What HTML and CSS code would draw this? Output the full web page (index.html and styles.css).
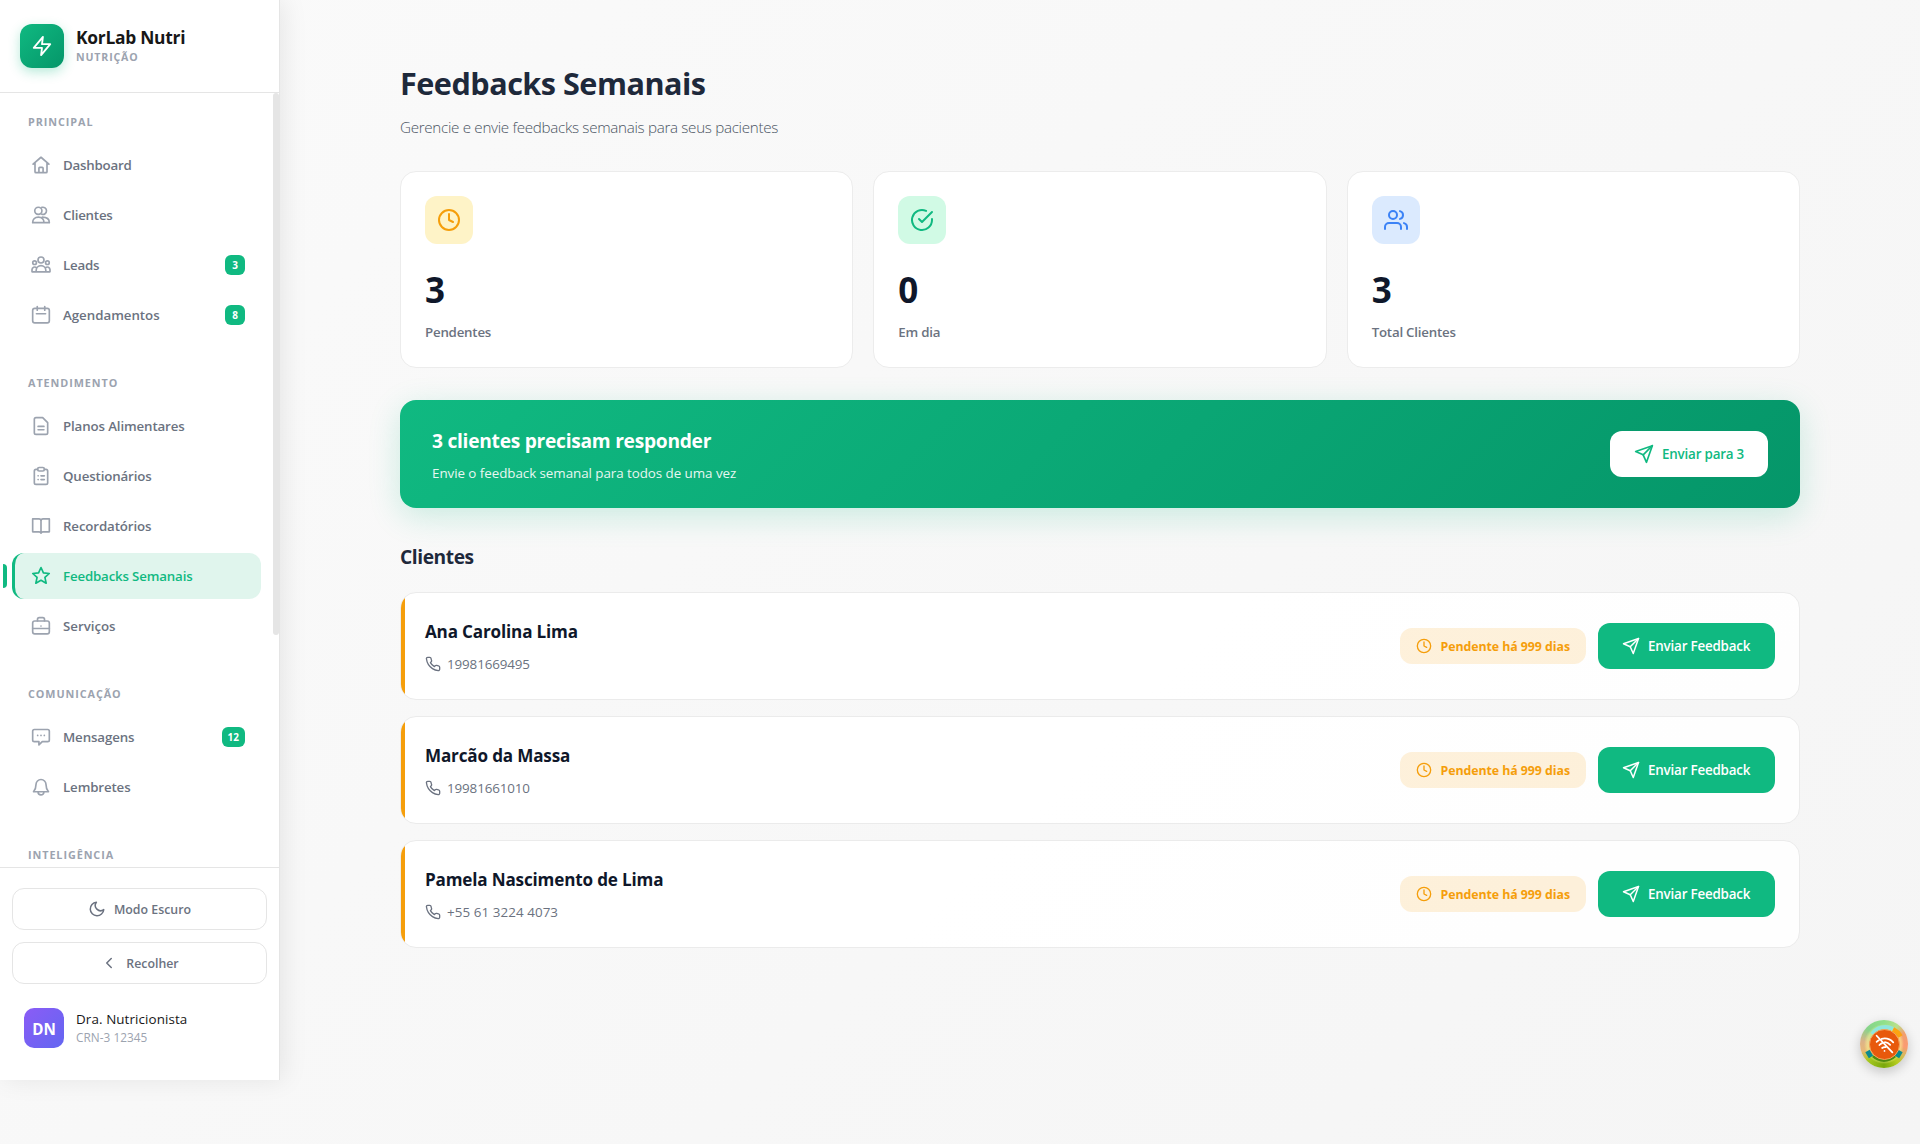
FILE: index.html
```html
<!DOCTYPE html>
<html lang="pt-BR">
<head>
<meta charset="utf-8">
<title>KorLab Nutri - Feedbacks Semanais</title>
<link rel="stylesheet" href="styles.css">
</head>
<body>
<svg class="sprite" aria-hidden="true">
  <symbol id="clock" viewBox="0 0 24 24"><circle cx="12" cy="12" r="10"/><path d="M12 6v6l4 2"/></symbol>
  <symbol id="send" viewBox="0 0 24 24"><path d="M22 2L11 13"/><path d="M22 2l-7 20-4-9-9-4 20-7z"/></symbol>
  <symbol id="phone" viewBox="0 0 24 24"><path d="M22 16.92v3a2 2 0 0 1-2.18 2 19.79 19.79 0 0 1-8.63-3.07 19.5 19.5 0 0 1-6-6 19.79 19.79 0 0 1-3.07-8.67A2 2 0 0 1 4.11 2h3a2 2 0 0 1 2 1.72 12.84 12.84 0 0 0 .7 2.81 2 2 0 0 1-.45 2.11L8.09 9.91a16 16 0 0 0 6 6l1.27-1.27a2 2 0 0 1 2.11-.45 12.84 12.84 0 0 0 2.81.7A2 2 0 0 1 22 16.92z"/></symbol>
</svg>
<div class="app">
  <aside class="sidebar">
    <header class="brand">
      <span class="brand-logo"><svg class="icon" viewBox="0 0 24 24"><path d="M13 2L3 14h9l-1 8 10-12h-9l1-8z"/></svg></span>
      <div class="brand-text">
        <div class="brand-name">KorLab Nutri</div>
        <div class="brand-sub">NUTRIÇÃO</div>
      </div>
    </header>
    <div class="nav-wrap">
      <nav class="nav">
        <section class="nav-section">
          <h3 class="nav-label">PRINCIPAL</h3>
          <a class="nav-item"><svg class="icon" viewBox="0 0 24 24"><path d="M2.5 11L12 2.7l9.500 8.300M4.800 9.500V20a1.200 1.200 0 0 0 1.200 1.200h12a1.200 1.200 0 0 0 1.200-1.200V9.500M9.500 21v-5.200a1 1 0 0 1 1-1h3a1 1 0 0 1 1 1V21"/></svg><span class="nav-text tight">Dashboard</span></a>
          <a class="nav-item"><svg class="icon" viewBox="0 0 24 24"><circle cx="8.800" cy="7" r="4.300"/><path d="M13 2.900a4.300 4.300 0 1 1 0 8.200M2 21.200c0-4 2.800-6.600 6.800-6.600s6.800 2.600 6.800 6.600zM13.500 14.600c5 0 8.500 2.400 8.500 6.600h-6.400"/></svg><span class="nav-text tight">Clientes</span></a>
          <a class="nav-item"><svg class="icon" viewBox="0 0 24 24"><circle cx="12" cy="6" r="3.600"/><circle cx="4.300" cy="9.200" r="2.200"/><circle cx="19.700" cy="9.200" r="2.200"/><path d="M6.200 20.200v-1.700a5.800 5.800 0 0 1 11.600 0v1.700zM6.200 20.200H1.200v-2.700a3.200 3.200 0 0 1 5.300-2.300M17.800 20.200h5v-2.700a3.200 3.200 0 0 0-5.300-2.300"/></svg><span class="nav-text tight">Leads</span><span class="badge">3</span></a>
          <a class="nav-item"><svg class="icon" viewBox="0 0 24 24"><rect x="2" y="4" width="20" height="17.500" rx="2.500"/><path d="M7.500 1.800v4.400M16.500 1.800v4.400M6.500 10.500h11"/></svg><span class="nav-text wide">Agendamentos</span><span class="badge">8</span></a>
        </section>
        <section class="nav-section">
          <h3 class="nav-label">ATENDIMENTO</h3>
          <a class="nav-item"><svg class="icon" viewBox="0 0 24 24"><path d="M14 2H6a2 2 0 0 0-2 2v16a2 2 0 0 0 2 2h12a2 2 0 0 0 2-2V8zM8.500 12.500h7M8.500 16.500h7"/></svg><span class="nav-text">Planos Alimentares</span></a>
          <a class="nav-item"><svg class="icon" viewBox="0 0 24 24"><path d="M8 4H6a2 2 0 0 0-2 2v14a2 2 0 0 0 2 2h12a2 2 0 0 0 2-2V6a2 2 0 0 0-2-2h-2"/><rect x="8" y="1.800" width="8" height="4.200" rx="1.800"/><path d="M8.500 11.800h.1M12 11.800h4M8.500 16.300h.1M12 16.300h4"/></svg><span class="nav-text">Questionários</span></a>
          <a class="nav-item"><svg class="icon" viewBox="0 0 24 24"><path d="M12 6a2.500 2.500 0 0 0-2.500-2.500H2V19h7.500A2.500 2.500 0 0 1 12 20.500zM12 6a2.500 2.500 0 0 1 2.500-2.500H22V19h-7.500a2.500 2.500 0 0 0-2.500 1.500"/></svg><span class="nav-text">Recordatórios</span></a>
          <a class="nav-item active"><svg class="icon" viewBox="0 0 24 24"><path d="M12 1.800l2.900 6.400 7 .8-5.200 4.700 1.500 7-6.200-3.600-6.200 3.600 1.500-7L2.100 9l7-.8z"/></svg><span class="nav-text">Feedbacks Semanais</span></a>
          <a class="nav-item"><svg class="icon" viewBox="0 0 24 24"><rect x="2" y="6" width="20" height="15.500" rx="2.500"/><path d="M7.800 6V4a2 2 0 0 1 2-2h4.400a2 2 0 0 1 2 2v2M2 15h20M12 12v.1"/></svg><span class="nav-text wide">Serviços</span></a>
        </section>
        <section class="nav-section">
          <h3 class="nav-label">COMUNICAÇÃO</h3>
          <a class="nav-item"><svg class="icon" viewBox="0 0 24 24"><path d="M4 3h16a2 2 0 0 1 2 2v10.500a2 2 0 0 1-2 2h-6.500L9.500 21.500v-4H4a2 2 0 0 1-2-2V5a2 2 0 0 1 2-2zM8 10v.1M12 10v.1M16 10v.1"/></svg><span class="nav-text">Mensagens</span><span class="badge">12</span></a>
          <a class="nav-item"><svg class="icon" viewBox="0 0 24 24"><path d="M18 9a6 6 0 0 0-12 0c0 5.500-3 8.700-3 8.700h18S18 14.500 18 9M8.500 18a3.500 3.500 0 0 0 7 0"/></svg><span class="nav-text">Lembretes</span></a>
        </section>
        <section class="nav-section">
          <h3 class="nav-label">INTELIGÊNCIA</h3>
        </section>
      </nav>
      <div class="scrollbar"></div>
    </div>
    <footer class="side-footer">
      <button class="side-btn"><svg class="icon" viewBox="0 0 24 24"><path d="M21 12.800A9 9 0 1 1 11.200 3a7 7 0 0 0 9.800 9.800z"/></svg>Modo Escuro</button>
      <button class="side-btn"><svg class="icon" viewBox="0 0 24 24"><path d="M15 18l-6-6 6-6"/></svg>Recolher</button>
      <div class="user">
        <span class="avatar">DN</span>
        <div class="user-text">
          <div class="user-name">Dra. Nutricionista</div>
          <div class="user-id">CRN-3 12345</div>
        </div>
      </div>
    </footer>
  </aside>

  <main class="main">
    <div class="content">
      <h1 class="title">Feedbacks Semanais</h1>
      <p class="subtitle">Gerencie e envie feedbacks semanais para seus pacientes</p>

      <div class="stats">
        <div class="stat">
          <span class="stat-icon amber"><svg class="icon"><use href="#clock"/></svg></span>
          <div class="stat-value">3</div>
          <div class="stat-label">Pendentes</div>
        </div>
        <div class="stat">
          <span class="stat-icon green"><svg class="icon" viewBox="0 0 24 24"><path d="M22 11.080V12a10 10 0 1 1-5.930-9.140"/><path d="M22 4L12 14.010l-3-3"/></svg></span>
          <div class="stat-value">0</div>
          <div class="stat-label">Em dia</div>
        </div>
        <div class="stat">
          <span class="stat-icon blue"><svg class="icon" viewBox="0 0 24 24"><path d="M17 21v-2a4 4 0 0 0-4-4H5a4 4 0 0 0-4 4v2"/><circle cx="9" cy="7" r="4"/><path d="M23 21v-2a4 4 0 0 0-3-3.870M16 3.130a4 4 0 0 1 0 7.750"/></svg></span>
          <div class="stat-value">3</div>
          <div class="stat-label">Total Clientes</div>
        </div>
      </div>

      <div class="banner">
        <div class="banner-text">
          <div class="banner-title">3 clientes precisam responder</div>
          <div class="banner-sub">Envie o feedback semanal para todos de uma vez</div>
        </div>
        <button class="btn btn-white"><svg class="icon"><use href="#send"/></svg>Enviar para 3</button>
      </div>

      <h2 class="section-title">Clientes</h2>
      <div class="list">
        <div class="client">
          <div>
            <div class="client-name">Ana Carolina Lima</div>
            <div class="client-phone"><svg class="icon"><use href="#phone"/></svg>19981669495</div>
          </div>
          <div class="client-actions">
            <span class="pill"><svg class="icon"><use href="#clock"/></svg>Pendente há 999 dias</span>
            <button class="btn btn-green"><svg class="icon"><use href="#send"/></svg>Enviar Feedback</button>
          </div>
        </div>
        <div class="client">
          <div>
            <div class="client-name">Marcão da Massa</div>
            <div class="client-phone"><svg class="icon"><use href="#phone"/></svg>19981661010</div>
          </div>
          <div class="client-actions">
            <span class="pill"><svg class="icon"><use href="#clock"/></svg>Pendente há 999 dias</span>
            <button class="btn btn-green"><svg class="icon"><use href="#send"/></svg>Enviar Feedback</button>
          </div>
        </div>
        <div class="client">
          <div>
            <div class="client-name">Pamela Nascimento de Lima</div>
            <div class="client-phone spaced"><svg class="icon"><use href="#phone"/></svg>+55 61 3224 4073</div>
          </div>
          <div class="client-actions">
            <span class="pill"><svg class="icon"><use href="#clock"/></svg>Pendente há 999 dias</span>
            <button class="btn btn-green"><svg class="icon"><use href="#send"/></svg>Enviar Feedback</button>
          </div>
        </div>
      </div>
    </div>
  </main>
</div>

<div class="offline">
  <svg class="offline-marks" viewBox="0 0 48 48">
    <path d="M12 14a16 16 0 0 1 21-5" stroke="#8fe6dc" stroke-width="4"/>
    <path d="M33 9.500a18 18 0 0 1 7.500 7" stroke="#fca311" stroke-width="5"/>
    <path d="M13 36a16 16 0 0 0 22 0" stroke="#4f8a10" stroke-width="3"/>
    <path d="M7.500 31l3.500 6M40.500 31l-3.500 6" stroke="#0b8a8f" stroke-width="5"/>
  </svg>
  <span class="offline-core"><svg class="icon" viewBox="0 0 24 24"><path d="M3 2l18 19M8.800 5.500A14 14 0 0 1 22 9.500M3 9a13 13 0 0 1 2.500-1.900M12.500 9.300a9.500 9.500 0 0 1 6 3.200M6.200 12.600a9.500 9.500 0 0 1 3-2.200M9.300 16a5 5 0 0 1 4-1M12 19.300v.1"/></svg></span>
</div>
</body>
</html>
```
FILE: styles.css
```css
* { box-sizing: border-box; margin: 0; padding: 0; }

body {
  position: relative;
  min-height: 1144px;
  font-family: "Open Sans", "Noto Sans", sans-serif;
  background: linear-gradient(135deg, #fafafa 0%, #f5f5f5 100%);
  color: #111827;
}

button { font-family: inherit; border: 0; cursor: pointer; }

.sprite { display: none; }

.icon {
  flex: none;
  fill: none;
  stroke: currentColor;
  stroke-width: 2;
  stroke-linecap: round;
  stroke-linejoin: round;
}

.app { display: flex; align-items: flex-start; }

/* Sidebar */
.sidebar {
  display: flex;
  flex-direction: column;
  flex: none;
  width: 280px;
  height: 1080px;
  background: #fff;
  border-right: 1px solid #e5e5e5;
  box-shadow: 4px 0 24px rgba(0, 0, 0, .08);
}

.brand {
  display: flex;
  align-items: center;
  gap: 12px;
  height: 93px;
  padding: 0 20px;
  border-bottom: 1px solid #e5e5e5;
}

.brand-logo {
  display: grid;
  place-items: center;
  width: 44px;
  height: 44px;
  border-radius: 12px;
  background: linear-gradient(135deg, #10b981, #059669);
  box-shadow: 0 4px 12px rgba(16, 185, 129, .3);
  color: #fff;
}
.brand-logo .icon { width: 22px; height: 22px; }

.brand-text { display: grid; gap: 3px; padding-bottom: 1px; }
.brand-name { font-size: 17.4px; line-height: 20px; font-weight: 700; letter-spacing: -.26px; color: #171717; }
.brand-sub { font-size: 10.6px; line-height: 14px; font-weight: 700; letter-spacing: .85px; color: #9ca3af; }

.nav-wrap { display: flex; flex: 1; min-height: 0; overflow: hidden; }
.nav { display: flex; flex-direction: column; gap: 36px; flex: 1; padding: 20px 12px 0; }
.nav-section { display: flex; flex-direction: column; gap: 4px; }
.scrollbar { flex: none; width: 6px; height: 542px; border-radius: 3px; background: #e5e5e5; }

.nav-label {
  padding-left: 16px;
  margin-bottom: 7px;
  font-size: 10.8px;
  line-height: 18px;
  font-weight: 700;
  letter-spacing: .93px;
  color: #9ca3af;
}

.nav-item {
  position: relative;
  display: flex;
  align-items: center;
  gap: 12px;
  height: 46px;
  padding: 0 16px;
  border-left: 3px solid transparent;
  border-radius: 12px;
  color: #6b7280;
}
.nav-item .icon { width: 20px; height: 20px; color: #9ca3af; }
.nav-text { flex: 1; font-size: 13.3px; font-weight: 600; letter-spacing: -.13px; }
.nav-text.tight { letter-spacing: -.22px; }
.nav-text.wide { letter-spacing: -.02px; }

.nav-item.active { border-left-color: #10b981; background: #e0f5ed; color: #10b981; }
.nav-item.active .icon { color: inherit; }
.nav-item.active .nav-text { letter-spacing: -.17px; }
.nav-item.active::before {
  content: "";
  position: absolute;
  left: -12px;
  top: 11px;
  width: 4px;
  height: 24px;
  border-radius: 0 4px 4px 0;
  background: #10b981;
}

.badge {
  min-width: 20px;
  padding: 0 6px;
  border-radius: 6px;
  background: #10b981;
  color: #fff;
  font-size: 10px;
  line-height: 20px;
  font-weight: 700;
  text-align: center;
}

.side-footer {
  display: flex;
  flex-direction: column;
  gap: 12px;
  height: 213px;
  padding: 20px 12px 0;
  border-top: 1px solid #e5e5e5;
}
.side-btn {
  display: flex;
  align-items: center;
  justify-content: center;
  gap: 8px;
  height: 42px;
  border: 1px solid #e5e5e5;
  border-radius: 12px;
  background: #fff;
  color: #6b7280;
  font-size: 12.35px;
  font-weight: 600;
}
.side-btn .icon { width: 18px; height: 18px; }

.user { display: flex; align-items: center; gap: 12px; padding: 12px; }
.avatar {
  display: grid;
  place-items: center;
  width: 40px;
  height: 40px;
  border-radius: 10px;
  background: linear-gradient(135deg, #8b5cf6, #6366f1);
  color: #fff;
  font-size: 15.2px;
  line-height: 20px;
  font-weight: 700;
  padding-top: 1px;
}
.user-text { display: grid; gap: 1px; padding-bottom: 1px; }
.user-name { font-size: 13.4px; line-height: 18px; font-weight: 500; letter-spacing: .1px; color: #171717; }
.user-id { font-size: 11.8px; line-height: 16px; letter-spacing: .04px; color: #9ca3af; }

/* Page */
.main { flex: 1; display: flex; justify-content: center; padding-top: 63px; }
.content { width: 1400px; }

.title { font-size: 30.6px; line-height: 40px; font-weight: 700; letter-spacing: -.5px; color: #1e293b; }
.subtitle { margin-top: 12px; font-size: 15.2px; line-height: 24px; font-weight: 300; letter-spacing: -.31px; color: #4b5563; }

.stats { display: grid; grid-template-columns: repeat(3, 1fr); gap: 20px; margin-top: 32px; }
.stat {
  height: 197px;
  padding: 24px;
  border: 1px solid #ececec;
  border-radius: 16px;
  background: #fff;
}
.stat-icon { display: grid; place-items: center; width: 48px; height: 48px; border-radius: 12px; }
.stat-icon .icon { width: 24px; height: 24px; }
.stat-icon.amber { background: #fef3c7; color: #f59e0b; }
.stat-icon.green { background: #d1fae5; color: #10b981; }
.stat-icon.blue { background: #dbeafe; color: #3b82f6; }
.stat-value { margin-top: 24px; font-size: 35px; line-height: 44px; font-weight: 700; color: #0f172a; }
.stat-label { margin-top: 10px; font-size: 13.3px; line-height: 20px; font-weight: 600; letter-spacing: -.22px; color: #6b7280; }

.banner {
  display: flex;
  align-items: center;
  justify-content: space-between;
  height: 108px;
  margin-top: 32px;
  padding: 0 32px;
  border-radius: 16px;
  background: linear-gradient(135deg, #10b981, #059669);
  box-shadow: 0 8px 32px rgba(16, 185, 129, .2);
  color: #fff;
}
.banner-text { display: grid; gap: 8px; padding-top: 3px; }
.banner-title { font-size: 19.2px; line-height: 26px; font-weight: 700; letter-spacing: -.27px; }
.banner-sub { font-size: 13.4px; line-height: 22px; letter-spacing: -.06px; opacity: .9; }

.btn {
  display: flex;
  align-items: center;
  gap: 8px;
  height: 46px;
  padding: 0 24px;
  border-radius: 12px;
  font-size: 13.4px;
  font-weight: 600;
  letter-spacing: -.2px;
  white-space: nowrap;
}
.btn .icon { width: 18px; height: 18px; }
.btn-white { width: 158px; background: #fff; color: #10b981; }
.btn-white .icon { width: 20px; height: 20px; }
.btn-green { width: 177px; background: #10b981; color: #fff; }

.section-title { margin-top: 34px; font-size: 19.2px; line-height: 30px; font-weight: 700; letter-spacing: -.42px; color: #1e293b; }

.list { display: grid; gap: 16px; margin-top: 20px; }
.client {
  position: relative;
  display: flex;
  align-items: center;
  justify-content: space-between;
  height: 108px;
  padding: 0 24px;
  overflow: hidden;
  border: 1px solid #ebebeb;
  border-radius: 16px;
  background: rgba(255, 255, 255, .9);
}
.client::before {
  content: "";
  position: absolute;
  inset: 0 auto 0 0;
  width: 4px;
  background: #f59e0b;
}
.client-name { margin-bottom: 9px; font-size: 17.1px; line-height: 26px; font-weight: 700; letter-spacing: -.17px; color: #0f172a; }
.client-phone { display: flex; align-items: center; gap: 6px; font-size: 13.4px; line-height: 20px; letter-spacing: -.12px; color: #6b7280; }
.client-phone.spaced { letter-spacing: .07px; }
.client-phone .icon { width: 16px; height: 16px; }
.client-actions { display: flex; align-items: center; gap: 12px; }

.pill {
  display: flex;
  align-items: center;
  gap: 8px;
  height: 36px;
  padding: 0 16px;
  border-radius: 12px;
  background: rgba(245, 158, 11, .15);
  color: #f59e0b;
  font-size: 12.35px;
  font-weight: 700;
  letter-spacing: -.05px;
}
.pill .icon { width: 16px; height: 16px; }

/* Offline indicator */
.offline {
  position: absolute;
  left: 1860px;
  top: 1020px;
  display: grid;
  place-items: center;
  width: 48px;
  height: 48px;
  border-radius: 50%;
  background:
    radial-gradient(circle, rgba(250, 250, 150, .5) 17px, transparent 20px),
    conic-gradient(#8fe08a, #b9e08c 10%, #f0a070 17%, #fb9a72 27%, #d8b860 33%, #b5cc1e 40%, #7aa80c 50%, #a5c820 62%, #e8b878 70%, #dcb388 77%, #86d48a 87%, #8fe08a);
  box-shadow: 0 4px 12px rgba(0, 0, 0, .2);
}
.offline-marks { grid-area: 1 / 1; width: 48px; height: 48px; fill: none; }
.offline-core {
  grid-area: 1 / 1;
  display: grid;
  place-items: center;
  width: 31px;
  height: 31px;
  border: 1px solid #f3a05c;
  border-radius: 50%;
  background: #e8590c;
  color: #fff;
}
.offline-core .icon { width: 21px; height: 21px; }
```
